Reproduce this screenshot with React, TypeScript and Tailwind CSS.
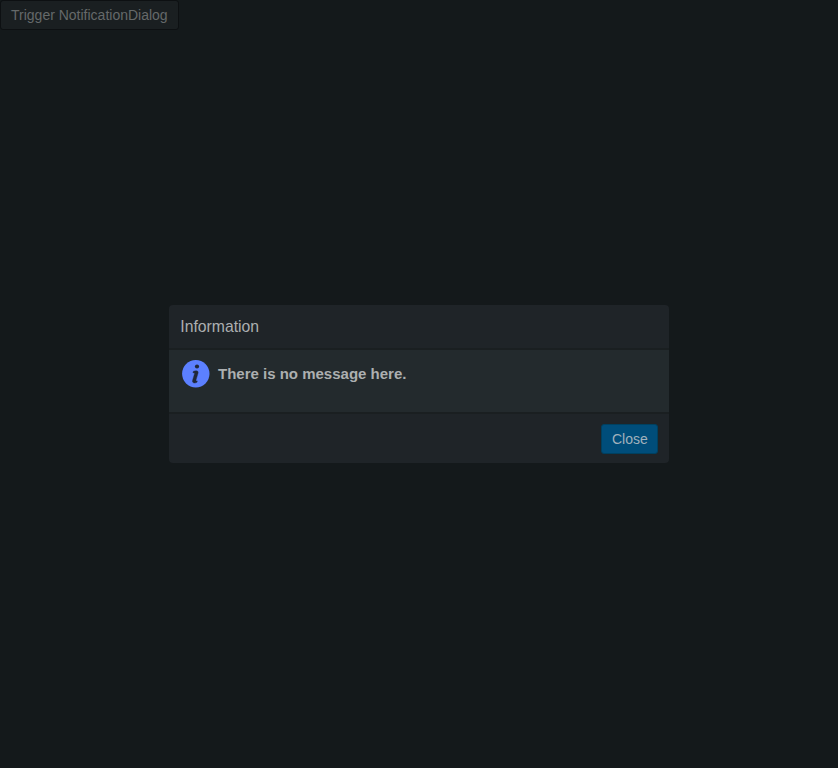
function InfoIcon() {
  return (
    <svg className="block size-7 shrink-0" viewBox="0 0 28 28" aria-hidden="true">
      <circle cx="13.8" cy="13.7" r="13.7" fill="#5c80ff" />
      <circle cx="15" cy="6.5" r="2.1" fill="#20283a" />
      <path
        d="M11.400 11.300Q13 10.700 14.200 10.700Q16.700 10.800 16.100 13.100L14 20.100Q13.700 21.200 14.700 21L15.300 20.900L15 22.300Q13.300 23.200 11.900 23Q9.900 22.500 10.600 20.200L12.500 13.700Q12.700 12.900 12 12.800L10.900 12.900Z"
        fill="#20283a"
        stroke="#20283a"
        strokeWidth="0.4"
      />
    </svg>
  );
}

export default function App() {
  return (
    <div className="relative h-screen overflow-hidden bg-[#14191b] font-['Liberation_Sans',Arial,sans-serif]">
      <button className="block h-[30px] w-[179px] rounded-[3px] border border-[#0d1012] bg-[#1a1f21] pl-[10px] text-left text-sm leading-5 whitespace-nowrap text-[#65696a]">
        Trigger NotificationDialog
      </button>
      <div className="absolute inset-0 flex items-center justify-center">
        <section
          role="dialog"
          className="flex h-[158px] w-[500px] flex-col overflow-hidden rounded-[4px] bg-[#1f2428] text-[#acafb0]"
        >
          <header className="flex h-[45px] items-center border-b-2 border-[#1a1f21] px-[11.25px] text-[15.75px]">
            <h2>Information</h2>
          </header>
          <div className="flex h-[62px] items-start gap-2 bg-[#232a2d] px-[13px] pt-[10px]">
            <InfoIcon />
            <p className="text-[15px] leading-[28px] font-bold">There is no message here.</p>
          </div>
          <footer className="flex flex-1 items-center justify-end border-t-2 border-[#1a1f21] px-[11px] pt-px">
            <button className="h-[30px] w-[57px] rounded-[3px] border border-[#00405f] bg-[#004d7a] pl-[10px] text-left text-sm leading-5 text-[#a1b1bc]">
              Close
            </button>
          </footer>
        </section>
      </div>
    </div>
  );
}
